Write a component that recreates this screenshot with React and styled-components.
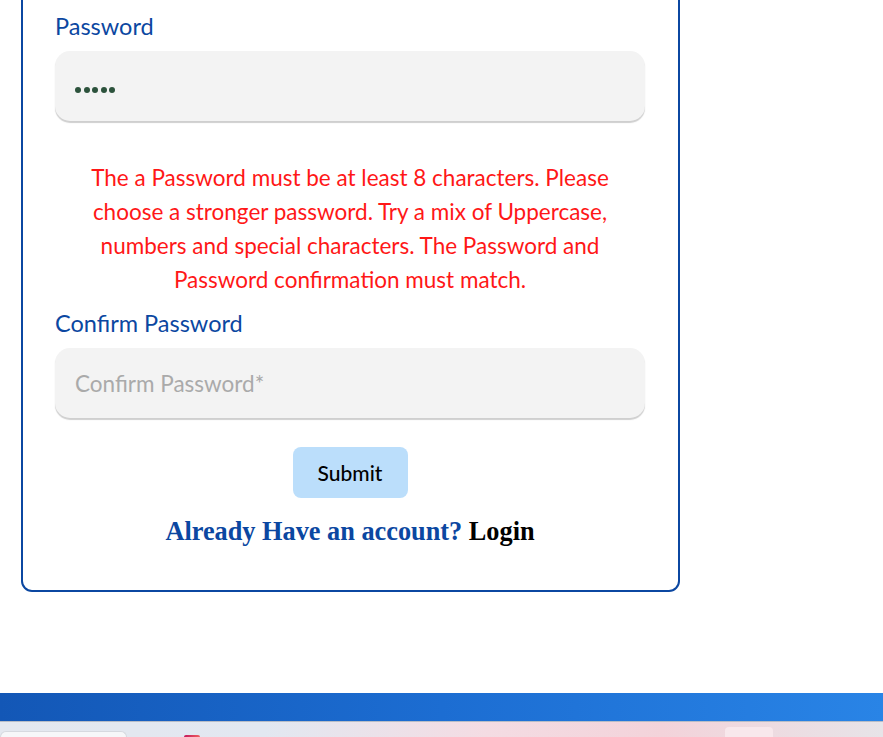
import React from "react";
import styled, { createGlobalStyle } from "styled-components";

const Global = createGlobalStyle`
  html, body { margin: 0; padding: 0; background: #ffffff; }
  body { font-family: Lato, "Noto Sans", sans-serif; overflow: hidden; }
  #root { width: 883px; height: 737px; overflow: hidden; }
`;

const Page = styled.div`
  width: 883px;
  height: 737px;
  display: flex;
  flex-direction: column;
  overflow: hidden;
`;

const Card = styled.div`
  margin: -30px 0 0 21px;
  width: 659px;
  box-sizing: border-box;
  border: 2px solid #0b47a1;
  border-radius: 11px;
  padding: 42px 33px 40px 32px;
  display: flex;
  flex-direction: column;
`;

const Label = styled.label`
  font-family: Lato, "Noto Sans", sans-serif;
  font-size: 23.5px;
  line-height: 24px;
  color: #0b47a1;
  margin-bottom: 13px;
`;

const Input = styled.div`
  height: 70px;
  border-radius: 15px;
  background: #f3f3f3;
  box-shadow: 0 2px 1px #cfcfcf;
  display: flex;
  align-items: center;
  padding: 0 20px;
  font-family: Lato, "Noto Sans", sans-serif;
  font-size: 22.5px;
  color: #aaaaaa;
`;

const Dots = styled.div`
  display: flex;
  gap: 2.5px;
  margin-top: 8px;
`;

const Dot = styled.span`
  width: 6px;
  height: 6px;
  border-radius: 50%;
  background: #2c523c;
`;

const Error = styled.p`
  margin: 40px 0 14px;
  padding: 0 20px;
  text-align: center;
  font-family: Lato, "Noto Sans", sans-serif;
  font-size: 22.5px;
  line-height: 34px;
  color: #ff1717;
`;

const SubmitRow = styled.div`
  display: flex;
  justify-content: center;
  margin-top: 29px;
`;

const Submit = styled.button`
  width: 115px;
  height: 51px;
  border: none;
  border-radius: 8px;
  background: #bbdefb;
  color: #000;
  font-family: Lato, "Noto Sans", sans-serif;
  font-size: 21px;
  font-weight: 500;
  padding: 0;
`;

const Footer = styled.p`
  margin: 16px 0 0;
  text-align: center;
  font-family: "Liberation Serif", "DejaVu Serif", serif;
  font-weight: 700;
  font-size: 26.3px;
  line-height: 36px;
  color: #0b47a1;
`;

const LoginLink = styled.span`
  color: #000;
`;

const Spacer = styled.div`
  flex: 1;
`;

const BlueBand = styled.div`
  height: 28px;
  background: linear-gradient(90deg, #1357b6 0%, #1c6dd2 50%, #2984e6 100%);
  border-bottom: 1px solid #b8bdc6;
  flex-shrink: 0;
`;

const Chrome = styled.div`
  height: 15px;
  flex-shrink: 0;
  display: flex;
  align-items: flex-end;
  background: linear-gradient(90deg, #e4e8ef 0%, #e2e8f1 30%, #f4dce3 55%, #f3d3da 75%, #e7e4e8 100%);
`;

const Tab = styled.div`
  width: 125px;
  height: 5px;
  margin-right: 57px;
  background: #f6f7f9;
  border-radius: 8px 8px 0 0;
  border: 1px solid #d6d9df;
  border-bottom: none;
`;

const Favicon = styled.div`
  width: 16px;
  height: 2px;
  background: linear-gradient(90deg, #c2185b, #f06060);
  border-radius: 2px 2px 0 0;
`;

const Pill = styled.div`
  width: 48px;
  height: 10px;
  margin-left: 525px;
  background: #f8e8ec;
  border-radius: 4px 4px 0 0;
`;

export default function App() {
  return (
    <Page>
      <Global />
      <Card>
        <Label>Password</Label>
        <Input>
          <Dots>
            {[0, 1, 2, 3, 4].map((i) => (
              <Dot key={i} />
            ))}
          </Dots>
        </Input>
        <Error>
          The a Password must be at least 8 characters. Please choose a stronger
          password. Try a mix of Uppercase, numbers and special characters. The
          Password and Password confirmation must match.
        </Error>
        <Label>Confirm Password</Label>
        <Input>Confirm Password*</Input>
        <SubmitRow>
          <Submit>Submit</Submit>
        </SubmitRow>
        <Footer>
          Already Have an account? <LoginLink>Login</LoginLink>
        </Footer>
      </Card>
      <Spacer />
      <BlueBand />
      <Chrome>
        <Tab />
        <Favicon />
        <Pill />
      </Chrome>
    </Page>
  );
}
